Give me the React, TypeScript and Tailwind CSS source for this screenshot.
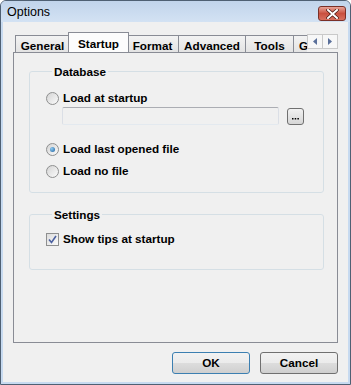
import React from "react";

const font = { fontFamily: '"Liberation Sans", Arial, sans-serif' };

const Radio: React.FC<{ checked?: boolean }> = ({ checked }) => (
  <span className="w-[13px] h-[13px] shrink-0 rounded-full border border-[#8e8f8f] bg-gradient-to-br from-[#d4d4d4] to-[#fbfbfb] flex items-center justify-center">
    {checked && (
      <span className="w-[5px] h-[5px] rounded-full bg-[radial-gradient(circle_at_35%_35%,#8ecbf2,#1d5f9d)]" />
    )}
  </span>
);

const Check: React.FC = () => (
  <span className="w-[13px] h-[13px] shrink-0 border border-[#8e8f8f] bg-gradient-to-br from-[#dcdcdc] to-[#fafafa] flex items-center justify-center">
    <svg width="9" height="9" viewBox="0 0 9 9">
      <path d="M1 4.5 L3.5 7.5 L8 1" fill="none" stroke="#4c61a0" strokeWidth="1.6" />
    </svg>
  </span>
);

const Tab: React.FC<{ label: string; width: string; active?: boolean }> = ({
  label,
  width,
  active,
}) =>
  active ? (
    <div
      className={`${width} h-[21px] -mb-px -mx-[2px] z-10 shrink-0 border border-b-0 border-[#898c95] bg-[#fcfcfc] flex justify-center pt-[2px] text-[11.7px] font-bold text-black`}
    >
      {label}
    </div>
  ) : (
    <div
      className={`${width} h-[17px] shrink-0 -ml-px first:ml-0 border border-b-0 border-[#898c95] bg-gradient-to-b from-[#f3f3f3] to-[#e3e3e3] flex justify-center pt-[1px] text-[11.7px] font-bold text-black`}
    >
      {label}
    </div>
  );

const Group: React.FC<{ title: string; className?: string; children: React.ReactNode }> = ({
  title,
  className,
  children,
}) => (
  <fieldset className={`border border-[#d5dfe5] rounded-[3px] pl-[16px] ${className ?? ""}`}>
    <legend className="ml-[6px] px-[2px] leading-[13px] text-[11.7px] font-bold text-black">
      {title}
    </legend>
    {children}
  </fieldset>
);

const App: React.FC = () => {
  return (
    <div
      className="w-[351px] h-[385px] bg-[#c7daf0] border border-[#4f6073] rounded-t-[6px] flex flex-col overflow-hidden"
      style={font}
    >
      <div className="h-[21px] shrink-0 flex items-center justify-between pl-[6px] pr-[4px] bg-gradient-to-b from-[#c1d4eb] to-[#d3e2f3]">
        <span className="text-[12.5px] text-black mt-[2px]">Options</span>
        <div className="w-[28px] h-[15px] mt-[4px] rounded-[3px] border border-[#7a3028] bg-gradient-to-b from-[#e7a398] via-[#c9503f] to-[#d8705f] flex items-center justify-center">
          <svg width="13" height="10" viewBox="0 0 13 10">
            <path
              d="M2 1 L11 9 M11 1 L2 9"
              stroke="#4a1a14"
              strokeWidth="3.4"
              strokeLinecap="square"
            />
            <path
              d="M2 1 L11 9 M11 1 L2 9"
              stroke="#ffffff"
              strokeWidth="2"
              strokeLinecap="square"
            />
          </svg>
        </div>
      </div>

      <div className="flex-1 mx-[2px] mb-[2px] bg-[#f0f0f0] flex flex-col px-[10px] pt-[10px]">
        <div className="h-[20px] flex items-end pl-[2px] shrink-0">
          <div className="flex-1 h-full flex items-end overflow-hidden">
            <Tab label="General" width="w-[55px]" />
            <Tab label="Startup" width="w-[61px]" active />
            <Tab label="Format" width="w-[53px]" />
            <Tab label="Advanced" width="w-[68px]" />
            <Tab label="Tools" width="w-[49px]" />
            <div className="w-[40px] h-[17px] shrink-0 -ml-px border border-b-0 border-[#898c95] bg-gradient-to-b from-[#f3f3f3] to-[#e3e3e3] pl-[5px] pt-[1px] text-[11.7px] font-bold text-black">
              G
            </div>
          </div>
          <div className="self-start mt-[2px] flex shrink-0">
            <div className="w-[16px] h-[15px] border border-[#c9c9c9] bg-[#f7f7f7] flex items-center justify-center">
              <svg width="4" height="7" viewBox="0 0 4 7">
                <path d="M4 0 L0 3.5 L4 7 Z" fill="#5a6f9a" />
              </svg>
            </div>
            <div className="w-[16px] h-[15px] -ml-px border border-[#c9c9c9] bg-[#f7f7f7] flex items-center justify-center">
              <svg width="4" height="7" viewBox="0 0 4 7">
                <path d="M0 0 L4 3.5 L0 7 Z" fill="#5a6f9a" />
              </svg>
            </div>
          </div>
        </div>

        <div className="h-[291px] shrink-0 border border-[#898c95] bg-[#f0f0f0] pl-[15px] pr-[13px] pt-[12px] text-[11.7px] font-bold text-black">
          <Group title="Database" className="pt-[13px] pb-[14px]">
            <div className="h-[14px] flex items-center gap-[4px]">
              <Radio />
              <span>Load at startup</span>
            </div>
            <div className="mt-[2px] flex items-start pl-[16px]">
              <div className="w-[217px] h-[18px] rounded-[2px] border border-[#abadb3] border-b-[#e3e9ef] border-x-[#dbdfe6] bg-[#f0f0f0]" />
              <div className="ml-[8px] mt-px w-[17px] h-[17px] rounded-[3px] border border-[#707070] bg-gradient-to-b from-[#f2f2f2] to-[#d6d6d6] flex items-end justify-center pb-[4px]">
                <svg width="7" height="2" viewBox="0 0 7 2">
                  <rect x="0" y="0" width="1.5" height="1.5" fill="#000" />
                  <rect x="2.7" y="0" width="1.5" height="1.5" fill="#000" />
                  <rect x="5.4" y="0" width="1.5" height="1.5" fill="#000" />
                </svg>
              </div>
            </div>
            <div className="mt-[17px] h-[14px] flex items-center gap-[4px]">
              <Radio checked />
              <span>Load last opened file</span>
            </div>
            <div className="mt-[8px] h-[14px] flex items-center gap-[4px]">
              <Radio />
              <span>Load no file</span>
            </div>
          </Group>

          <Group title="Settings" className="mt-[15px] pt-[11px] pb-[23px]">
            <div className="h-[14px] flex items-center gap-[4px]">
              <Check />
              <span>Show tips at startup</span>
            </div>
          </Group>
        </div>

        <div className="mt-[9px] flex justify-end gap-[10px]">
          <button
            type="button"
            className="w-[78px] h-[22px] rounded-[3px] border border-[#3c7fb1] bg-[linear-gradient(#f2f2f2_0%,#ebebeb_50%,#dddddd_50%,#cfcfcf_100%)] text-[11.7px] font-bold text-black"
          >
            OK
          </button>
          <button
            type="button"
            className="w-[78px] h-[22px] rounded-[3px] border border-[#707070] bg-[linear-gradient(#f2f2f2_0%,#ebebeb_50%,#dddddd_50%,#cfcfcf_100%)] text-[11.7px] font-bold text-black"
          >
            Cancel
          </button>
        </div>
      </div>
    </div>
  );
};

export default App;
